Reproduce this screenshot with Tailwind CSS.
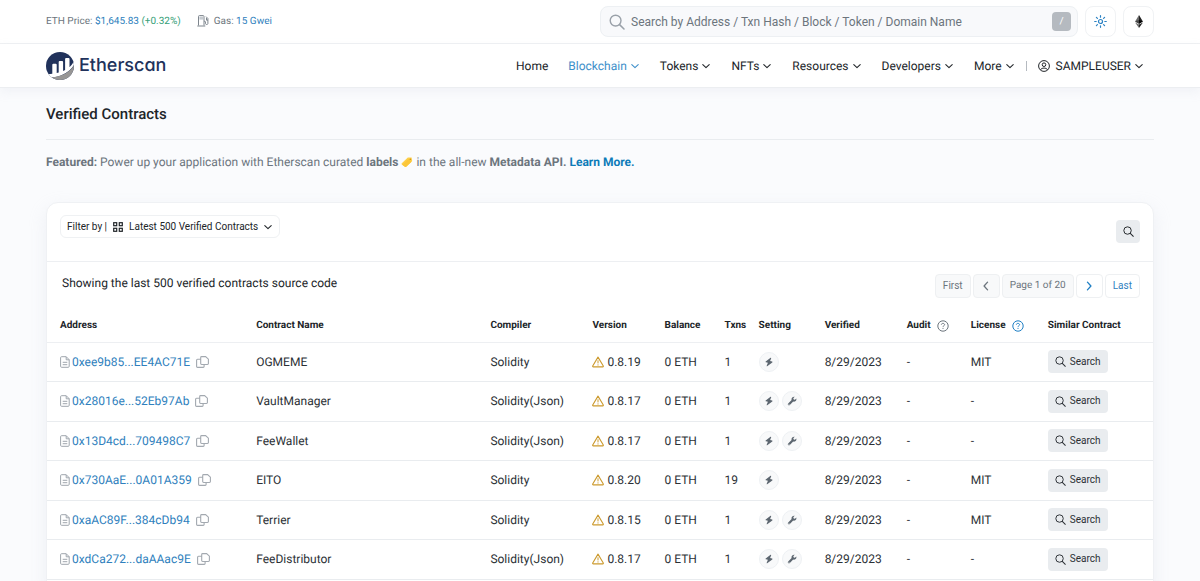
<!DOCTYPE html>
<html lang="en">
<head>
<meta charset="utf-8">
<meta name="viewport" content="width=device-width, initial-scale=1">
<title>Verified Contracts | Etherscan</title>
<script src="https://cdn.jsdelivr.net/npm/@tailwindcss/browser@4"></script>
</head>
<body class="bg-[#fafbfd] font-[Roboto,sans-serif] text-xs text-[#212529] [text-rendering:geometricPrecision]">
<svg class="hidden" aria-hidden="true">
  <symbol id="chev" viewBox="0 0 10 10"><path d="M1.800 3.700 5 6.600 8.200 3.700" fill="none" stroke="currentColor" stroke-width="1.100" stroke-linecap="round" stroke-linejoin="round"/></symbol>
  <symbol id="glass" viewBox="0 0 16 16"><circle cx="6.6" cy="6.6" r="5.4" fill="none" stroke="currentColor" stroke-width="1.4"/><path d="m10.6 10.6 4.4 4.4" stroke="currentColor" stroke-width="1.5" stroke-linecap="round"/></symbol>
  <symbol id="doc" viewBox="0 0 10 12"><path d="M1.6.7h4.6l3 3v6.6a1 1 0 0 1-1 1H1.6a1 1 0 0 1-1-1V1.7a1 1 0 0 1 1-1ZM6.2.8v3h3M2.7 6.3h4.6M2.7 8.7h4.6" fill="none" stroke="currentColor" stroke-width="1"/></symbol>
  <symbol id="copy" viewBox="0 0 13 12"><path d="M5.6.6h4l2.8 2.6v4.4a.9.9 0 0 1-.9.9H5.6a.9.9 0 0 1-.9-.9V1.5a.9.9 0 0 1 .9-.9ZM4.6 3.3H1.5a.9.9 0 0 0-.9.9v6.3c0 .5.4.9.9.9h5.7c.5 0 .9-.4.9-.9V8.6" fill="none" stroke="currentColor" stroke-width="1.1"/></symbol>
  <symbol id="warn" viewBox="0 0 12 12"><path d="M6 1.1 11.3 10a.6.6 0 0 1-.5.9H1.2a.6.6 0 0 1-.5-.9Z" fill="none" stroke="currentColor" stroke-width="1.1" stroke-linejoin="round"/><path d="M6 4.3v3.1M6 8.4v1.1" stroke="currentColor" stroke-width="1"/></symbol>
  <symbol id="bolt" viewBox="0 0 10 10"><path d="M6.600.8 1.700 4.500c-.3.300-.2.700.3.700L3.900 5.800 2.700 8.800c-.2.500.1.700.5.400l5.100-3.800c.4-.3.200-.7-.2-.8L6.100 4.100 7.200 1.200C7.300.8 7 .5 6.600.8Z" fill="currentColor"/></symbol>
  <symbol id="wrench" viewBox="0 0 10 10"><path d="M9.300 2.400 7.900 3.800 6.700 3.400 6.300 2.200 7.700.8A2.600 2.600 0 0 0 4.600 4L1.200 7.400a1.100 1.100 0 0 0 1.600 1.600L6.200 5.600A2.600 2.600 0 0 0 9.300 2.400Z" fill="currentColor"/><circle cx="2" cy="8.200" r=".5" fill="#f8f9fa"/></symbol>
  <symbol id="help" viewBox="0 0 12 12"><circle cx="6" cy="6" r="5.200" fill="none" stroke="currentColor" stroke-width="1"/><path d="M4.400 4.700c0-.9.700-1.300 1.500-1.300.9 0 1.700.4 1.700 1.300 0 1-1.600 1.100-1.600 2.100M6 7.900v1" fill="none" stroke="currentColor" stroke-width="1"/></symbol>
</svg>

<header class="bg-white">
  <div class="border-b border-[#eff1f3]">
    <div class="flex h-[43px] items-center justify-between px-[46px]">
      <div class="flex items-center text-[10px] text-[#6c757d]">
        <span>ETH Price: <a href="#" class="text-[#2f7fbd]">$1,645.83 <span class="text-[#36a078]">(+0.32%)</span></a></span>
        <svg class="ml-4 h-3 w-3" viewBox="0 0 12 12" fill="none" stroke="#7d858d" stroke-width="1" aria-hidden="true"><path d="M1.500 10.500V1.500a.9.900 0 0 1 .9-.9h3.700a.9.900 0 0 1 .9.900v9M.3 11h8" /><path d="M2.400 1.600h3.700v3H2.400Z" fill="#c5cad0" stroke="none"/><path d="M7 6.300h.7c.5 0 .8.300.8.800v1.500c0 1.200 2.400 1.200 2.400 0V3.500L9 1.600M10.900 5.200H9.500V3" /></svg>
        <span class="ml-[5px]">Gas: <a href="#" class="text-[#2f7fbd]">15 Gwei</a></span>
      </div>
      <div class="flex items-center gap-[7px]">
        <form class="flex h-[31px] w-[478px] items-center rounded-lg border border-[#edf0f3] bg-[#f8f9fb] pr-[6px] pl-2">
          <svg class="h-4 w-4 text-[#9aa1a9]" aria-hidden="true"><use href="#glass"/></svg>
          <input type="text" aria-label="Search" placeholder="Search by Address / Txn Hash / Block / Token / Domain Name" class="ml-[6px] min-w-0 flex-1 bg-transparent text-xs outline-none placeholder:text-[#6c757d]">
          <kbd class="flex h-[19px] w-[19px] items-center justify-center rounded bg-[#b5bac0] font-[Roboto,sans-serif] text-[10px] text-white">/</kbd>
        </form>
        <button type="button" aria-label="Theme" class="flex h-[31px] w-[31px] items-center justify-center rounded-lg border border-[#f0f2f4] bg-white">
          <svg class="h-[13px] w-[13px]" viewBox="0 0 13 13" fill="none" stroke="#2b82c4" stroke-width="1.200" stroke-linecap="round"><circle cx="6.500" cy="6.500" r="2"/><path d="M6.500.7v1.500M6.500 10.800v1.500M.7 6.500h1.500M10.800 6.500h1.500M2.400 2.400l1 1M9.600 9.600l1 1M2.400 10.600l1-1M9.600 3.400l1-1"/></svg>
        </button>
        <button type="button" aria-label="Network" class="flex h-[31px] w-[31px] items-center justify-center rounded-lg border border-[#f0f2f4] bg-white">
          <svg class="h-[13px] w-2" viewBox="0 0 8 13"><path d="M4 0v8.800L.1 6.600Z" fill="#6b6b6b"/><path d="M4 0v8.800l3.900-2.200Z" fill="#222"/><path d="M4 4.900v3.900L.1 6.600Z" fill="#444"/><path d="M4 4.900v3.900l3.900-2.200Z" fill="#050505"/><path d="M4 9.600V13L.1 7.400Z" fill="#6b6b6b"/><path d="M4 9.600V13l3.900-5.600Z" fill="#222"/></svg>
        </button>
      </div>
    </div>
  </div>
  <div class="border-b border-[#eceef1] shadow-[0_4px_10px_rgba(189,197,209,0.15)]">
    <div class="flex h-[43px] items-center justify-between pr-[56px] pl-[46px]">
      <a href="#" class="flex items-center gap-[5px] text-[#21325b]">
        <svg class="h-7 w-7" viewBox="0 0 28 28" aria-hidden="true">
          <clipPath id="disc"><circle cx="14" cy="14" r="14"/></clipPath>
          <g clip-path="url(#disc)">
            <path d="M0 0h28v28H0Z" fill="#21325b"/>
            <path d="M0 21.500c1.500 1 3 .8 6.300.2v-8.900a1 1 0 0 1 1-1h2.400a1 1 0 0 1 1 1v8.300l2-.6V10a1 1 0 0 1 1-1h2.400a1 1 0 0 1 1 1v8.900l2-1V7a1 1 0 0 1 1-1h2.400a1 1 0 0 1 1 1v8.200Q26 12.700 28 9.500v3.500C23 21 14 25 5 25.500L0 28Z" fill="#fff"/>
            <path d="M28.500 12.500C24 20.500 15 25 5.500 25.500V29H29Z" fill="#979695"/>
          </g>
        </svg>
        <span class="font-[Inter,sans-serif] text-lg leading-6 font-medium [font-feature-settings:'cv11']">Etherscan</span>
      </a>
      <nav aria-label="Main" class="flex items-center gap-5 text-[12px]">
        <a href="#">Home</a>
        <a href="#" class="flex items-center gap-[3px] text-[#3d8fca]">Blockchain <svg class="h-[10px] w-[10px]"><use href="#chev"/></svg></a>
        <a href="#" class="flex items-center gap-[3px]">Tokens <svg class="h-[10px] w-[10px]"><use href="#chev"/></svg></a>
        <a href="#" class="flex items-center gap-[3px]">NFTs <svg class="h-[10px] w-[10px]"><use href="#chev"/></svg></a>
        <a href="#" class="flex items-center gap-[3px]">Resources <svg class="h-[10px] w-[10px]"><use href="#chev"/></svg></a>
        <a href="#" class="flex items-center gap-[3px]">Developers <svg class="h-[10px] w-[10px]"><use href="#chev"/></svg></a>
        <div class="flex items-center gap-[11px]">
          <a href="#" class="flex items-center gap-[3px]">More <svg class="h-[10px] w-[10px]"><use href="#chev"/></svg></a>
          <span class="h-[10px] w-px bg-[#b5bac0]"></span>
          <a href="#" class="flex items-center gap-[3px]"><svg class="mr-[3px] h-3 w-3" viewBox="0 0 12 12" fill="none" stroke="currentColor" stroke-width="1"><circle cx="6" cy="6" r="5.400"/><circle cx="6" cy="4.700" r="1.800"/><path d="M2.500 9.800C3.500 7.500 8.500 7.500 9.500 9.800"/></svg> SAMPLEUSER <svg class="h-[10px] w-[10px]"><use href="#chev"/></svg></a>
        </div>
      </nav>
    </div>
  </div>
</header>

<main class="px-[46px]">
  <h1 class="border-b border-[#e9ecef] pt-4 pb-[15px] text-[15px] leading-5 font-medium">Verified Contracts</h1>
  <p class="flex items-center pt-[14px] text-xs leading-4 text-[#6c757d]">
    <span><b>Featured:</b> Power up your application with Etherscan curated <b>labels</b></span>
    <svg class="mx-[3px] h-3 w-3" viewBox="0 0 12 12" aria-hidden="true"><path d="M.8 7.200 6.800 1.600l3.800-.2.6 3.500-6 5.800a1 1 0 0 1-1.300 0L.8 8.500a.9.900 0 0 1 0-1.300Z" fill="#fdd04a"/><path d="m1.200 8.800 6.300-6.100 3.100 3-5.400 5a1 1 0 0 1-1.300 0Z" fill="#fbc63a"/><circle cx="9.300" cy="3.200" r=".8" fill="#c98d1c"/></svg>
    <span>in the all-new <b>Metadata API.</b> <a href="#" class="font-bold text-[#0e7bb8]">Learn More.</a></span>
  </p>

  <section class="mt-8 rounded-xl border border-[#eff1f4] bg-white pb-4 shadow-[0_6px_18px_rgba(189,197,209,0.2)]">
    <div class="flex h-[59px] items-start justify-between border-b border-[#edeff2] px-[13px] pt-3">
      <button type="button" class="flex h-[23px] items-center rounded-md border border-[#eff1f3] px-[6px] text-[10px]">Filter by |
        <svg class="mx-[6px] h-[10px] w-[10px]" viewBox="0 0 10 10" fill="none" stroke="currentColor" stroke-width="1.200"><rect x=".7" y=".7" width="3" height="3"/><rect x="6.300" y=".7" width="3" height="3"/><rect x=".7" y="6.300" width="3" height="3"/><rect x="6.300" y="6.300" width="3" height="3"/></svg>
        Latest 500 Verified Contracts <svg class="ml-[5px] h-[10px] w-[10px]"><use href="#chev"/></svg></button>
      <button type="button" aria-label="Search contracts" class="mt-[5px] flex h-[23px] w-6 items-center justify-center rounded bg-[#e9ecef]"><svg class="h-[11px] w-[11px]"><use href="#glass"/></svg></button>
    </div>
    <div class="flex items-start justify-between pt-3 pr-[13px] pb-3 pl-[15px]">
      <p class="text-xs leading-[18px]">Showing the last 500 verified contracts source code</p>
      <nav aria-label="Pages" class="flex gap-[2px] text-[10px] text-[#6c757d]">
        <button type="button" disabled class="h-6 rounded border border-[#eef0f2] bg-[#f8f9fa] px-[7px]">First</button>
        <button type="button" disabled aria-label="Previous" class="flex h-6 w-[27px] items-center justify-center rounded border border-[#eef0f2] bg-[#f8f9fa]"><svg class="h-3 w-3 rotate-90"><use href="#chev"/></svg></button>
        <span class="flex h-6 items-center rounded border border-[#eef0f2] bg-[#f8f9fa] px-[7px]">Page 1 of 20</span>
        <button type="button" aria-label="Next" class="flex h-6 w-[27px] items-center justify-center rounded border border-[#eef0f2] text-[#1f7fc4]"><svg class="h-3 w-3 -rotate-90"><use href="#chev"/></svg></button>
        <button type="button" class="h-6 rounded border border-[#eef0f2] px-[7px] text-[#3181c0]">Last</button>
      </nav>
    </div>
    <table class="w-full table-fixed border-collapse text-left">
      <colgroup><col class="w-[196px]"><col class="w-[234px]"><col class="w-[102px]"><col class="w-[72px]"><col class="w-[60px]"><col class="w-[34px]"><col class="w-[66px]"><col class="w-[82px]"><col class="w-[64px]"><col class="w-[77px]"><col class="w-[118px]"></colgroup>
      <thead>
        <tr class="h-8 border-b border-[#edeff2] text-[10px] whitespace-nowrap *:pl-[13px] *:font-bold">
          <th>Address</th><th>Contract Name</th><th>Compiler</th><th>Version</th><th>Balance</th><th>Txns</th><th>Setting</th><th>Verified</th>
          <th><span class="flex items-center gap-[6px]">Audit <svg class="h-3 w-3 text-[#6c757d]"><use href="#help"/></svg></span></th>
          <th><span class="flex items-center gap-[6px]">License <svg class="h-3 w-3 text-[#1f7fc4]"><use href="#help"/></svg></span></th>
          <th>Similar Contract</th>
        </tr>
      </thead>
      <tbody id="rows" class="text-[#2b3035]"></tbody>
    </table>
  </section>
</main>

<script>
const contracts = [
  ['0xee9b85...EE4AC71E', 'OGMEME', 'Solidity', '0.8.19', 1, false, 'MIT'],
  ['0x28016e...52Eb97Ab', 'VaultManager', 'Solidity(Json)', '0.8.17', 1, true, '-'],
  ['0x13D4cd...709498C7', 'FeeWallet', 'Solidity(Json)', '0.8.17', 1, true, '-'],
  ['0x730AaE...0A01A359', 'EITO', 'Solidity', '0.8.20', 19, false, 'MIT'],
  ['0xaAC89F...384cDb94', 'Terrier', 'Solidity', '0.8.15', 1, true, 'MIT'],
  ['0xdCa272...daAAac9E', 'FeeDistributor', 'Solidity(Json)', '0.8.17', 1, true, '-'],
];
const badge = icon => `<span class="flex h-5 w-5 items-center justify-center rounded-full border border-[#eef1f4] bg-[#f8f9fa] text-[#5c6670]"><svg class="h-[10px] w-[10px]"><use href="#${icon}"/></svg></span>`;
document.getElementById('rows').innerHTML = contracts.map(([address, name, compiler, version, txns, optimised, license]) => `
  <tr class="h-[39px] border-b border-[#e9ecef] whitespace-nowrap even:h-10 *:pl-[13px]">
    <td><span class="flex items-center"><svg class="h-3 w-[10px] text-[#9fa6ad]"><use href="#doc"/></svg><a href="#" class="ml-[2px] text-[#2f7fbd]">${address}</a><button type="button" aria-label="Copy address" class="ml-[6px] text-[#a3a9b0]"><svg class="h-3 w-[13px]"><use href="#copy"/></svg></button></span></td>
    <td>${name}</td><td>${compiler}</td>
    <td><span class="flex items-center gap-[3px]"><svg class="h-3 w-3 text-[#cc9a2e]"><use href="#warn"/></svg>${version}</span></td>
    <td>0 ETH</td><td>${txns}</td>
    <td><span class="flex gap-[3px]">${badge('bolt')}${optimised ? badge('wrench') : ''}</span></td>
    <td>8/29/2023</td><td>-</td><td>${license}</td>
    <td><button type="button" class="flex h-[23px] items-center gap-1 rounded bg-[#e9ecef] px-[7px] text-[10px]"><svg class="h-[11px] w-[11px]"><use href="#glass"/></svg>Search</button></td>
  </tr>`).join('');
</script>
</body>
</html>
